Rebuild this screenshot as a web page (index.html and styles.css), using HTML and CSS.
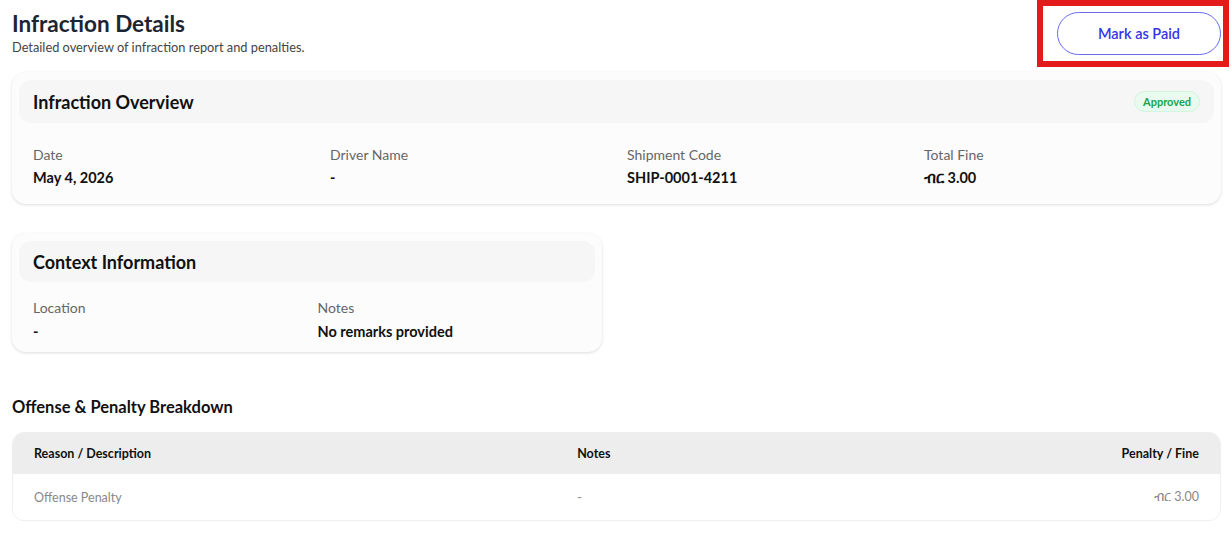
FILE: index.html
```html
<!DOCTYPE html>
<html lang="en">
<head>
    <meta charset="UTF-8">
    <meta name="viewport" content="width=device-width, initial-scale=1.0">
    <title>Infraction Details</title>
    <link rel="stylesheet" href="styles.css">
</head>
<body>
    <main class="page">
        <div class="top-bar">
            <div class="page-title">
                <h1>Infraction Details</h1>
                <p>Detailed overview of infraction report and penalties.</p>
            </div>
            <div class="action-frame">
                <button class="paid-button">Mark as Paid</button>
            </div>
        </div>

        <section class="info-card">
            <div class="card-header">
                <h2>Infraction Overview</h2>
                <span class="status-badge">Approved</span>
            </div>
            <div class="field-grid four">
                <div class="field">
                    <span class="field-label">Date</span>
                    <span class="field-value">May 4, 2026</span>
                </div>
                <div class="field">
                    <span class="field-label">Driver Name</span>
                    <span class="field-value">-</span>
                </div>
                <div class="field">
                    <span class="field-label">Shipment Code</span>
                    <span class="field-value">SHIP-0001-4211</span>
                </div>
                <div class="field">
                    <span class="field-label">Total Fine</span>
                    <span class="field-value">ብር 3.00</span>
                </div>
            </div>
        </section>

        <section class="info-card half">
            <div class="card-header">
                <h2>Context Information</h2>
            </div>
            <div class="field-grid two">
                <div class="field">
                    <span class="field-label">Location</span>
                    <span class="field-value">-</span>
                </div>
                <div class="field">
                    <span class="field-label">Notes</span>
                    <span class="field-value">No remarks provided</span>
                </div>
            </div>
        </section>

        <h3 class="section-title">Offense &amp; Penalty Breakdown</h3>
        <div class="table-wrap">
            <table class="penalty-table">
                <thead>
                    <tr>
                        <th class="col-reason">Reason / Description</th>
                        <th class="col-notes">Notes</th>
                        <th class="col-fine">Penalty / Fine</th>
                    </tr>
                </thead>
                <tbody>
                    <tr>
                        <td>Offense Penalty</td>
                        <td>-</td>
                        <td class="col-fine">ብር 3.00</td>
                    </tr>
                </tbody>
            </table>
        </div>
    </main>
</body>
</html>
```

FILE: styles.css
```css
body {
    margin: 0;
    padding: 0;
    background-color: #fff;
    font-family: Lato, "Noto Sans", "DejaVu Sans", sans-serif;
    color: #111;
}

.page {
    padding: 0 11px 12px 12px;
}

.top-bar {
    display: flex;
    justify-content: space-between;
    align-items: flex-start;
    margin-bottom: 5px;
}

.page-title h1 {
    margin: 10px 0 0;
    font-size: 22.5px;
    line-height: 28px;
    font-weight: 700;
    color: #1d2533;
}

.page-title p {
    margin: 1px 0 0;
    font-size: 12.8px;
    line-height: 16px;
    color: #444;
}

.action-frame {
    border: 6px solid #e31b1b;
    padding: 6px 2px 6px 14px;
    margin-right: -8px;
}

.paid-button {
    width: 164px;
    height: 43px;
    border: 1px solid #6a6af2;
    border-radius: 22px;
    background: #fff;
    color: #3434e6;
    font-family: inherit;
    font-size: 14.5px;
    font-weight: 600;
    cursor: pointer;
}

.info-card {
    background-color: #fcfcfc;
    border-radius: 14px;
    box-shadow: 0 1px 3px rgba(0, 0, 0, 0.14);
    padding: 8px 7px 16px;
    margin-bottom: 29px;
}

.info-card.half {
    width: 576px;
    padding-bottom: 10px;
}

.card-header {
    display: flex;
    align-items: center;
    justify-content: space-between;
    height: 43px;
    padding: 0 14px;
    background-color: #f6f6f6;
    border-radius: 12px;
}

.info-card.half .card-header {
    height: 41px;
}

.card-header h2 {
    margin: 0;
    font-size: 18px;
    font-weight: 700;
    color: #111;
}

.status-badge {
    padding: 3px 8px;
    font-size: 11px;
    font-weight: 700;
    color: #1aa34a;
    background-color: #e9fbef;
    border: 1px solid #d2f5dd;
    border-radius: 12px;
}

.field-grid {
    display: grid;
    gap: 21px;
    padding: 22px 14px 0;
}

.field-grid.four {
    grid-template-columns: repeat(4, 1fr);
}

.field-grid.two {
    grid-template-columns: repeat(2, 1fr);
    padding-top: 16px;
}

.field {
    display: flex;
    flex-direction: column;
    gap: 3px;
}

.field-label {
    font-size: 14px;
    line-height: 20px;
    color: #666;
}

.field-value {
    font-size: 14.5px;
    line-height: 20px;
    font-weight: 700;
    color: #111;
}

.field-grid.two .field-value {
    line-height: 21px;
}

.section-title {
    margin: 0 0 15px;
    padding-top: 16px;
    font-size: 16.5px;
    line-height: 20px;
    font-weight: 700;
    color: #111;
}

.table-wrap {
    border: 1px solid #eeeeee;
    border-radius: 12px;
    overflow: hidden;
}

.penalty-table {
    width: 100%;
    border-collapse: collapse;
    font-size: 12.5px;
}

.penalty-table th {
    height: 41px;
    padding: 0 21px;
    text-align: left;
    font-weight: 700;
    color: #111;
    background-color: #ededed;
}

.penalty-table td {
    height: 46px;
    padding: 0 21px;
    color: #888;
    background-color: #fff;
}

.penalty-table .col-reason {
    width: 45%;
}

.penalty-table .col-fine {
    text-align: right;
}
```
